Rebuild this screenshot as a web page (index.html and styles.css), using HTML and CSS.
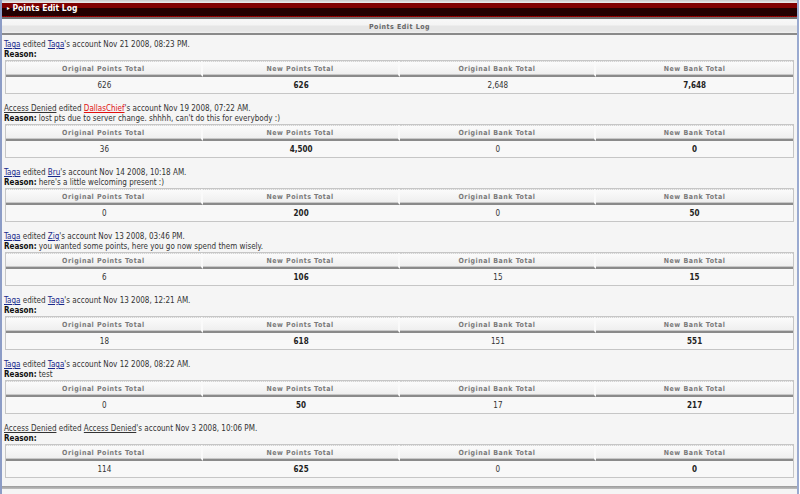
FILE: index.html
```html
<!DOCTYPE html>
<html>
<head>
<meta charset="utf-8">
<link rel="stylesheet" href="styles.css">
</head>
<body>
<div class="page">
  <div class="topline"></div>
  <div class="titlebar"><span class="arrow">&#9656;</span> Points Edit Log</div>
  <div class="subhead"><span>Points Edit Log</span></div>
  <div class="content">

    <div class="entry">
      <div class="line"><a class="u blue">Taga</a> edited <a class="u blue">Taga</a>'s account Nov 21 2008, 08:23 PM.</div>
      <div class="line"><b>Reason:</b></div>
      <div class="tbl">
        <div class="th">Original Points Total</div><div class="th">New Points Total</div><div class="th">Original Bank Total</div><div class="th">New Bank Total</div>
        <div class="td">626</div><div class="td b">626</div><div class="td">2,648</div><div class="td b">7,648</div>
      </div>
    </div>

    <div class="entry">
      <div class="line"><a class="u grey">Access Denied</a> edited <a class="u red">DallasChief</a>'s account Nov 19 2008, 07:22 AM.</div>
      <div class="line"><b>Reason:</b> lost pts due to server change. shhhh, can't do this for everybody :)</div>
      <div class="tbl">
        <div class="th">Original Points Total</div><div class="th">New Points Total</div><div class="th">Original Bank Total</div><div class="th">New Bank Total</div>
        <div class="td">36</div><div class="td b">4,500</div><div class="td">0</div><div class="td b">0</div>
      </div>
    </div>

    <div class="entry">
      <div class="line"><a class="u blue">Taga</a> edited <a class="u blue">Bru</a>'s account Nov 14 2008, 10:18 AM.</div>
      <div class="line"><b>Reason:</b> here's a little welcoming present :)</div>
      <div class="tbl">
        <div class="th">Original Points Total</div><div class="th">New Points Total</div><div class="th">Original Bank Total</div><div class="th">New Bank Total</div>
        <div class="td">0</div><div class="td b">200</div><div class="td">0</div><div class="td b">50</div>
      </div>
    </div>

    <div class="entry">
      <div class="line"><a class="u blue">Taga</a> edited <a class="u blue">Zig</a>'s account Nov 13 2008, 03:46 PM.</div>
      <div class="line"><b>Reason:</b> you wanted some points, here you go now spend them wisely.</div>
      <div class="tbl">
        <div class="th">Original Points Total</div><div class="th">New Points Total</div><div class="th">Original Bank Total</div><div class="th">New Bank Total</div>
        <div class="td">6</div><div class="td b">106</div><div class="td">15</div><div class="td b">15</div>
      </div>
    </div>

    <div class="entry">
      <div class="line"><a class="u blue">Taga</a> edited <a class="u blue">Taga</a>'s account Nov 13 2008, 12:21 AM.</div>
      <div class="line"><b>Reason:</b></div>
      <div class="tbl">
        <div class="th">Original Points Total</div><div class="th">New Points Total</div><div class="th">Original Bank Total</div><div class="th">New Bank Total</div>
        <div class="td">18</div><div class="td b">618</div><div class="td">151</div><div class="td b">551</div>
      </div>
    </div>

    <div class="entry">
      <div class="line"><a class="u blue">Taga</a> edited <a class="u blue">Taga</a>'s account Nov 12 2008, 08:22 AM.</div>
      <div class="line"><b>Reason:</b> test</div>
      <div class="tbl">
        <div class="th">Original Points Total</div><div class="th">New Points Total</div><div class="th">Original Bank Total</div><div class="th">New Bank Total</div>
        <div class="td">0</div><div class="td b">50</div><div class="td">17</div><div class="td b">217</div>
      </div>
    </div>

    <div class="entry last">
      <div class="line"><a class="u grey">Access Denied</a> edited <a class="u grey">Access Denied</a>'s account Nov 3 2008, 10:06 PM.</div>
      <div class="line"><b>Reason:</b></div>
      <div class="tbl">
        <div class="th">Original Points Total</div><div class="th">New Points Total</div><div class="th">Original Bank Total</div><div class="th">New Bank Total</div>
        <div class="td">114</div><div class="td b">625</div><div class="td">0</div><div class="td b">0</div>
      </div>
    </div>

  </div>
  <div class="bottombar"></div>
</div>
</body>
</html>
```
FILE: styles.css
```css
html, body {
  margin: 0;
  padding: 0;
  background: #ffffff;
}
body {
  font-family: "DejaVu Sans Condensed", "DejaVu Sans", Verdana, sans-serif;
  font-size: 8px;
  color: #333333;
  overflow: hidden;
  height: 494px;
}
.page {
  width: 795px;
  height: 494px;
  border-left: 2px solid #8c9cc6;
  border-right: 2px solid #9aaad0;
  background: #f5f5f5;
  overflow: hidden;
}
.topline {
  height: 3px;
  background: linear-gradient(#c8c8c8, #ececec);
}
.titlebar {
  height: 13px;
  line-height: 10px;
  background: linear-gradient(#800000 0, #800000 5px, #230000 5px, #230000 100%);
  border-bottom: 1px dotted #a00000;
  color: #ffffff;
  font-weight: bold;
  font-size: 8.5px;
  padding-left: 5px;
}
.arrow {
  font-size: 6px;
  vertical-align: 1px;
}
.subhead {
  border-top: 2px solid #707070;
  height: 14px;
  border-bottom: 2px solid #8a8a8a;
  background: linear-gradient(#f8f8f8 0, #f4f4f4 6px, #e6e6e6 7px, #e6e6e6 12px, #f0f0f0 14px);
  text-align: center;
  line-height: 16px;
}
.subhead span {
  font-size: 7px;
  font-weight: bold;
  color: #666666;
  letter-spacing: 0.5px;
}
.content {
  padding: 4px 3px 0 2px;
}
.entry {
  height: 64px;
}
.entry.last {
  height: 63px;
}
.line {
  height: 10px;
  line-height: 11px;
  white-space: nowrap;
}
.line b {
  color: #111111;
}
.u {
  text-decoration: underline;
}
.blue { color: #1a2a8c; }
.grey { color: #333333; }
.red { color: #e01010; }
.tbl {
  margin: 1px 0 0 1px;
  border: 1px solid #c6c6c6;
  display: grid;
  grid-template-columns: repeat(4, 1fr);
  background: #f8f8f8;
}
.th {
  height: 13px;
  line-height: 14px;
  border-top: 1px dotted #d4d4d4;
  border-bottom: 2px solid #8a8a8a;
  box-shadow: inset 0 -1px 0 #c8c8c8;
  border-right: 2px solid #fafafa;
  background: linear-gradient(#fbfbfb, #eeeeee);
  text-align: center;
  font-size: 7px;
  font-weight: bold;
  color: #7a7a7a;
  letter-spacing: 0.5px;
}
.th:nth-child(4) { border-right: none; }
.td {
  height: 16px;
  line-height: 17px;
  text-align: center;
  color: #333333;
}
.td.b {
  font-weight: bold;
  color: #222222;
}
.bottombar {
  height: 3px;
  background: linear-gradient(#9a9a9a, #c0c0c0);
}
```
